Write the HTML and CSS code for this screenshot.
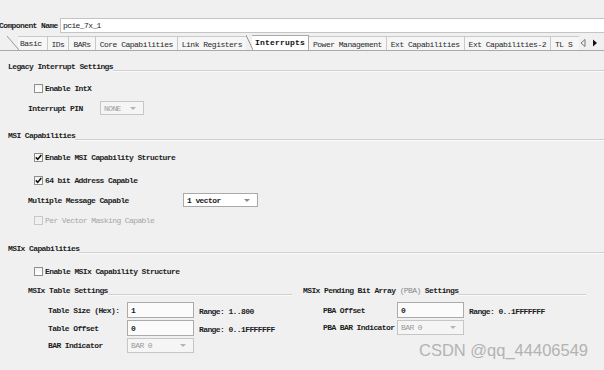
FILE: index.html
```html
<!DOCTYPE html>
<html>
<head>
  <title>Interrupts</title>
  <link rel="stylesheet" href="styles.css">
</head>
<body>
  <div class="comp-row">
    <span class="comp-label">Component Name</span>
    <div class="comp-input">pcie_7x_1</div>
  </div>

  <div class="tabs">
    <div class="tab first">Basic</div>
    <div class="tab">IDs</div>
    <div class="tab">BARs</div>
    <div class="tab">Core Capabilities</div>
    <div class="tab before-active">Link Registers</div>
    <div class="tab active">Interrupts</div>
    <div class="tab">Power Management</div>
    <div class="tab">Ext Capabilities</div>
    <div class="tab">Ext Capabilities-2</div>
    <div class="tab last">TL S</div>
    <div class="tab-arrows">
      <svg width="6" height="8" viewBox="0 0 6 8"><path d="M5 0.5 L1 4 L5 7.5 Z" fill="none" stroke="#777" stroke-width="1"/></svg>
      <svg width="6" height="8" viewBox="0 0 6 8"><path d="M1 0.5 L5 4 L1 7.5 Z" fill="#111"/></svg>
    </div>
  </div>

  <div class="panel">
    <div class="group-title legacy"><span>Legacy Interrupt Settings</span><i></i></div>
    <div class="check-row intx"><span class="box"></span>Enable IntX</div>
    <div class="field-row pin">
      <span class="lbl lbl-pin">Interrupt PIN</span>
      <div class="select disabled sel-pin">NONE<b class="arrow"></b></div>
    </div>

    <div class="group-title msi"><span>MSI Capabilities</span><i></i></div>
    <div class="check-row msi-en">
      <span class="box"><svg width="7" height="7" viewBox="0 0 7 7"><path d="M0.8 3.4 L2.7 5.4 L6.3 1" fill="none" stroke="#111" stroke-width="1.6"/></svg></span>Enable MSI Capability Structure
    </div>
    <div class="check-row addr64">
      <span class="box"><svg width="7" height="7" viewBox="0 0 7 7"><path d="M0.8 3.4 L2.7 5.4 L6.3 1" fill="none" stroke="#111" stroke-width="1.6"/></svg></span>64 bit Address Capable
    </div>
    <div class="field-row mmc">
      <span class="lbl lbl-mmc">Multiple Message Capable</span>
      <div class="select sel-vec">1 vector<b class="arrow"></b></div>
    </div>
    <div class="check-row pvm off"><span class="box"></span>Per Vector Masking Capable</div>

    <div class="group-title msix"><span>MSIx Capabilities</span><i></i></div>
    <div class="check-row msix-en"><span class="box"></span>Enable MSIx Capability Structure</div>

    <div class="msix-cols">
      <div class="col left-col">
        <div class="sub-title"><span>MSIx Table Settings</span><i></i></div>
        <div class="form-row first-row">
          <span class="lbl lbl-tbl">Table Size (Hex):</span>
          <div class="text-input">1</div>
          <span class="range">Range: 1..800</span>
        </div>
        <div class="form-row">
          <span class="lbl lbl-tbl">Table Offset</span>
          <div class="text-input">0</div>
          <span class="range">Range: 0..1FFFFFFF</span>
        </div>
        <div class="form-row">
          <span class="lbl lbl-tbl">BAR Indicator</span>
          <div class="select disabled sel-bar">BAR 0<b class="arrow"></b></div>
        </div>
      </div>
      <div class="col right-col">
        <div class="sub-title"><span>MSIx Pending Bit Array <em>(PBA)</em> Settings</span><i></i></div>
        <div class="form-row first-row">
          <span class="lbl lbl-pba">PBA Offset</span>
          <div class="text-input">0</div>
          <span class="range">Range: 0..1FFFFFFF</span>
        </div>
        <div class="form-row">
          <span class="lbl lbl-pba">PBA BAR Indicator</span>
          <div class="select disabled sel-bar">BAR 0<b class="arrow"></b></div>
        </div>
      </div>
    </div>
  </div>

  <div class="watermark">CSDN @qq_44406549</div>
</body>
</html>
```

FILE: styles.css
```css
    body {
      margin: 0;
      width: 604px;
      height: 370px;
      overflow: hidden;
      position: relative;
      background-color: #f0f0f0;
      font-family: "Liberation Mono", monospace;
      font-size: 8px;
      font-weight: bold;
      letter-spacing: -0.6px;
      color: #1e1e1e;
    }

    /* Component name */
    .comp-row {
      display: flex;
      align-items: center;
      height: 15px;
      margin-top: 18px;
    }

    .comp-label {
      width: 61px;
      margin-left: -1px;
    }

    .comp-input {
      flex: 1;
      height: 15px;
      line-height: 14px;
      box-sizing: border-box;
      background-color: #ffffff;
      border: 1px solid #c4c4c4;
      border-right: none;
      padding-left: 2px;
      font-weight: normal;
    }

    /* Tabs */
    .tabs {
      display: flex;
      height: 15px;
      margin-top: 3px;
      border-bottom: 1px solid #a9a9a9;
      box-sizing: border-box;
      position: relative;
    }

    .tab {
      height: 14px;
      line-height: 15px;
      padding: 0 4px 0 4px;
      border-top: 1px solid #c9c9c9;
      border-right: 1px solid #c9c9c9;
      background-color: #f6f6f6;
      font-weight: normal;
      letter-spacing: -0.5px;
      color: #2a2a2a;
      box-sizing: border-box;
      white-space: nowrap;
      position: relative;
    }

    .tab.first {
      margin-left: 7px;
      padding-left: 13px;
      padding-right: 5px;
      border-top: none;
      background: linear-gradient(to top right, transparent calc(50% - 0.8px), #9a9a9a 50%, transparent calc(50% + 0.8px)) 0 0 / 12px 14px no-repeat,
                  linear-gradient(#c9c9c9, #c9c9c9) 11px 0 / 100% 1px no-repeat,
                  linear-gradient(#f6f6f6, #f6f6f6) 11px 0 / 100% 100% no-repeat;
    }

    .tab.before-active {
      padding-right: 4px;
      border-right: none;
    }

    .tab.active {
      padding: 0 3px 0 9px;
      font-weight: bold;
      letter-spacing: 0.2px;
      color: #111;
      height: 15px;
      margin-top: -1px;
      border-top: none;
      background: linear-gradient(to top right, transparent calc(50% - 0.8px), #8a8a8a 50%, transparent calc(50% + 0.8px)) 0 0 / 7px 15px no-repeat,
                  linear-gradient(#a9a9a9, #a9a9a9) 6px 0 / 100% 1px no-repeat,
                  linear-gradient(#ffffff, #ffffff) 6px 0 / 100% 100% no-repeat;
      border-right: 1px solid #a9a9a9;
      line-height: 16px;
    }

    .tab.last {
      width: 28px;
      padding-right: 0;
      border-right: none;
    }

    .tab-arrows {
      display: flex;
      align-items: center;
      gap: 6px;
      margin-left: 1px;
      height: 14px;
    }

    /* Panel */
    .panel {
      padding-left: 8px;
    }

    .group-title {
      display: flex;
      align-items: flex-end;
      height: 12px;
      line-height: 12px;
    }

    .group-title i,
    .sub-title i {
      flex: 1;
      height: 0;
      border-bottom: 1px solid #cfcfcf;
      box-shadow: 0 1px 0 #fafafa;
      margin-bottom: 2px;
    }

    .legacy { margin-top: 10px; }
    .msi { margin-top: 15px; }
    .msix { margin-top: 17px; }

    .check-row {
      display: flex;
      align-items: center;
      height: 12px;
      padding-left: 26px;
    }

    .intx { margin-top: 9px; }
    .msi-en { margin-top: 9px; }
    .addr64 { margin-top: 11px; }
    .pvm { margin-top: 7px; }
    .msix-en { margin-top: 10px; }

    .box {
      width: 9px;
      height: 9px;
      box-sizing: border-box;
      border: 1px solid #8e8e8e;
      background: linear-gradient(#f2f2f2, #ffffff);
      margin-right: 2px;
      display: flex;
      align-items: center;
      justify-content: center;
    }

    .check-row.off {
      color: #a6a6a6;
      font-weight: normal;
    }

    .check-row.off .box {
      border-color: #c8c8c8;
      background: #f0f0f0;
    }

    .field-row {
      display: flex;
      align-items: center;
      height: 14px;
      padding-left: 20px;
      margin-top: 7px;
    }

    .lbl-pin { width: 72px; }
    .lbl-mmc { width: 155px; }

    .select {
      position: relative;
      height: 14px;
      line-height: 13px;
      box-sizing: border-box;
      border: 1px solid #a9a9a9;
      background-color: #ffffff;
      padding-left: 3px;
      font-weight: normal;
    }

    .select.disabled {
      border-color: #c6c6c6;
      background-color: #f5f5f5;
      color: #9a9a9a;
    }

    .arrow {
      position: absolute;
      right: 7px;
      top: 5px;
      width: 0;
      height: 0;
      border-left: 3px solid transparent;
      border-right: 3px solid transparent;
      border-top: 3px solid #8c8c8c;
    }

    .select.disabled .arrow {
      border-top-color: #b4b4b4;
    }

    .sel-pin { width: 44px; }
    .sel-vec { width: 75px; font-weight: bold; }
    .sel-bar { width: 67px; height: 15px; }

    /* MSIx columns */
    .msix-cols {
      display: grid;
      grid-template-columns: 264px 283px;
      column-gap: 11px;
      margin-top: 8px;
      padding-left: 20px;
    }

    .sub-title {
      display: flex;
      align-items: flex-end;
      height: 12px;
      line-height: 12px;
      margin-bottom: 5px;
    }

    .sub-title em {
      font-style: normal;
      font-weight: normal;
      color: #8a8a8a;
    }

    .form-row {
      display: flex;
      align-items: center;
      padding-left: 20px;
      margin-bottom: 2px;
    }

    .lbl-tbl { width: 79px; }
    .lbl-pba { width: 74px; }

    .text-input {
      width: 67px;
      height: 16px;
      line-height: 15px;
      box-sizing: border-box;
      border: 1px solid #ababab;
      background-color: #fbfbfb;
      padding-left: 3px;
    }

    .range {
      margin-left: 5px;
      margin-top: 3px;
    }

    /* Watermark */
    .watermark {
      position: absolute;
      left: 419px;
      top: 341px;
      font-family: "Liberation Sans", Arial, sans-serif;
      font-size: 16.5px;
      font-weight: normal;
      letter-spacing: 0;
      color: #b3b3b3;
    }
```
